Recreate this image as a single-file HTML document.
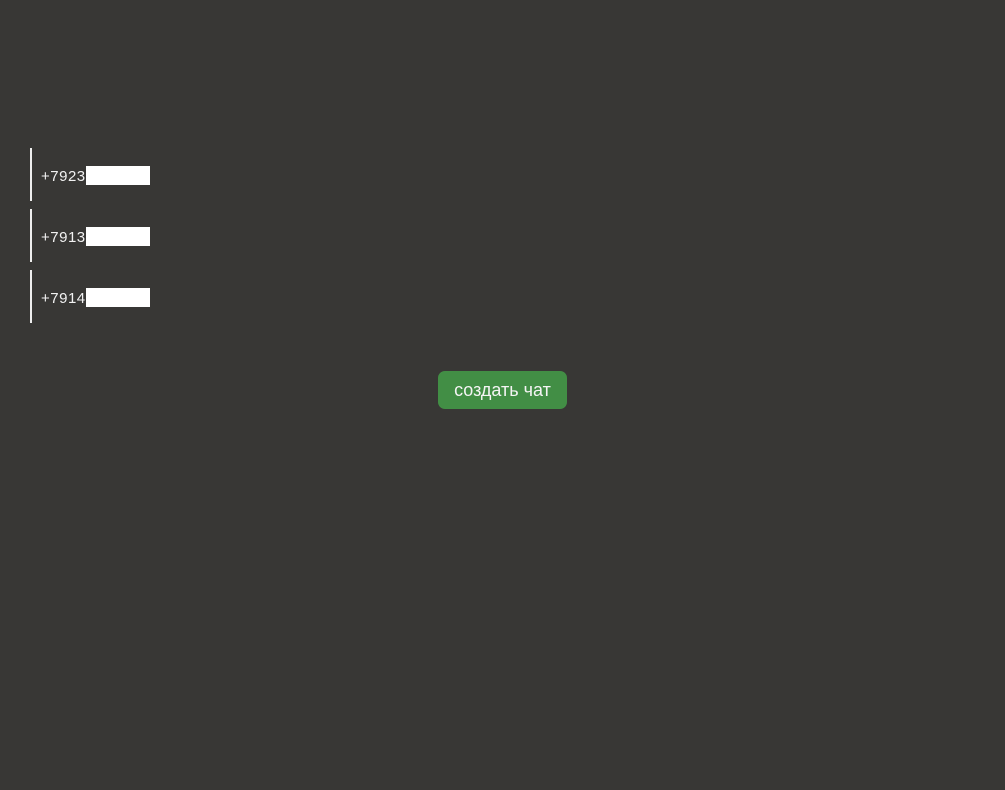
<!DOCTYPE html>
<html><head><meta charset="utf-8"><style>
html,body{margin:0;padding:0;width:1005px;height:790px;background:#383735;overflow:hidden;font-family:"Liberation Sans","DejaVu Sans",sans-serif;}
.row{position:absolute;left:30px;width:2px;height:53px;background:#eee;}
.t{position:absolute;left:41px;color:#f2f2f2;font-size:15px;line-height:19px;letter-spacing:0.5px;}
.w{position:absolute;left:86px;width:64px;height:19px;background:#fff;}
.btn{position:absolute;left:438px;top:371px;width:129px;height:38px;background:#428e45;border-radius:7px;color:#f4f4f4;font-size:18px;line-height:38px;text-align:center;}
</style></head><body>
<div class="row" style="top:148px"></div><div class="t" style="top:167px">+7923</div><div class="w" style="top:166px"></div>
<div class="row" style="top:209px"></div><div class="t" style="top:228px">+7913</div><div class="w" style="top:227px"></div>
<div class="row" style="top:270px"></div><div class="t" style="top:289px">+7914</div><div class="w" style="top:288px"></div>
<div class="btn">создать чат</div>
</body></html>
